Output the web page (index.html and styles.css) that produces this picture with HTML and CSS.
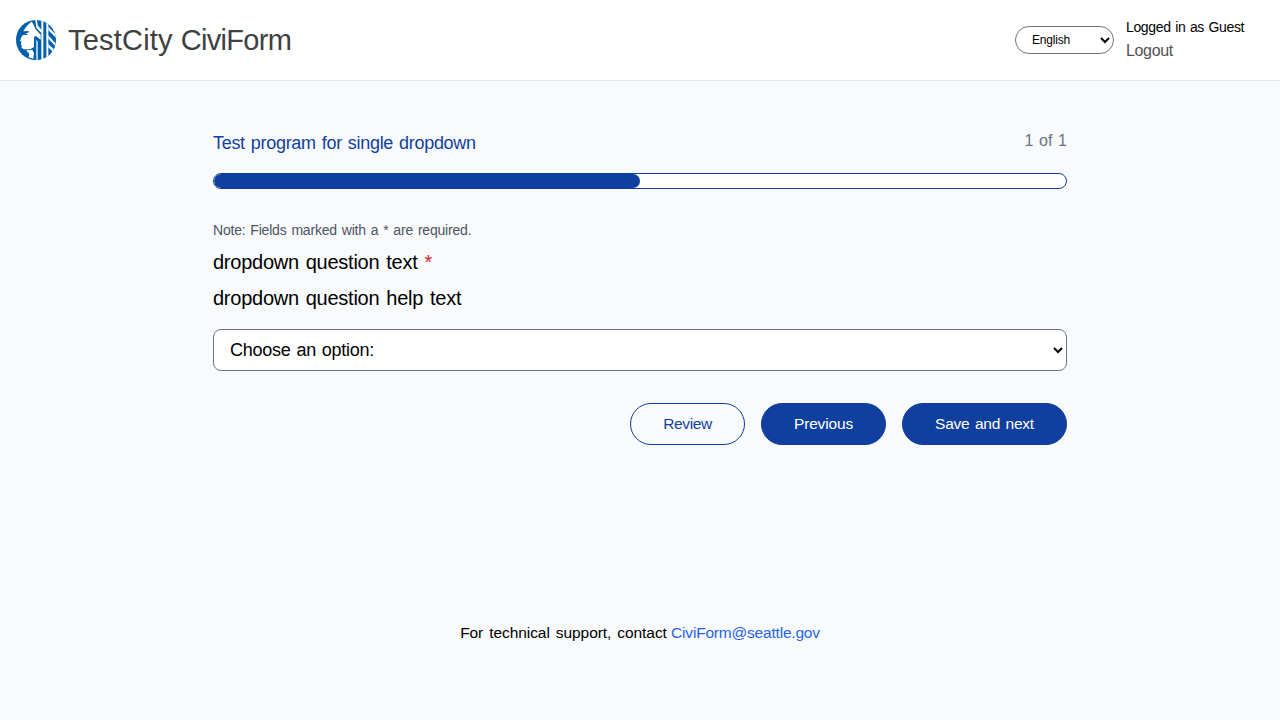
FILE: index.html
```html
<!DOCTYPE html>
<html lang="en">
<head>
<meta charset="utf-8">
<title>TestCity CiviForm</title>
<link rel="stylesheet" href="styles.css">
</head>
<body>
<header class="header">
  <a class="brand" href="#">
    <svg class="logo" viewBox="0 0 120 120" aria-hidden="true">
      <defs><clipPath id="disc"><circle cx="60" cy="60" r="60"/></clipPath></defs>
      <g clip-path="url(#disc)">
        <rect width="120" height="120" fill="#0060ab"/>
        <g fill="#fff">
          <path d="M47 5C36 12 27 23 22 34L37 33L39 37L30 40L36 45L24 44L18 47L12 62L17 66L14 72L17 76L17 84L24 88H43L54 81V51L60 48L74 59V44L58 27L52 12Z"/>
          <path d="M30 91L49 90L54 99L52 116L38 112L40 101Z"/>
          <path d="M58 0H63L65 16L77 31V40L61 24Z"/>
          <path d="M61 61L65 64V120H61Z"/>
          <path d="M76 0H82V120H76Z"/>
          <path d="M91 0H97V120H91Z"/>
          <path d="M97 20L120 44V53L97 31Z"/>
          <path d="M97 46L120 72V80L97 56Z"/>
          <path d="M97 72L120 94V105L97 82Z"/>
        </g>
      </g>
    </svg>
    <span class="brand-name"><span class="city">TestCity</span> <span class="product">CiviForm</span></span>
  </a>
  <div class="account">
    <select class="language" aria-label="Language"><option>English</option></select>
    <div class="session">
      <div class="guest">Logged in as Guest</div>
      <a class="logout" href="#">Logout</a>
    </div>
  </div>
</header>
<main class="main">
  <div class="program">
    <h1 class="program-title">Test program for single dropdown</h1>
    <span class="step">1 of 1</span>
  </div>
  <div class="progress"><div class="progress-fill"></div></div>
  <form class="form">
    <p class="note">Note: Fields marked with a * are required.</p>
    <p class="question">dropdown question text <span class="required">*</span></p>
    <p class="question help">dropdown question help text</p>
    <select class="answer" aria-label="Answer"><option>Choose an option:</option></select>
    <div class="actions">
      <a class="button outline" href="#">Review</a>
      <button class="button previous" type="button">Previous</button>
      <button class="button next" type="button">Save and next</button>
    </div>
  </form>
</main>
<footer class="footer"><span class="support">For technical support, contact</span> <a class="email" href="#">CiviForm@seattle.gov</a></footer>
</body>
</html>
```
FILE: styles.css
```css
* { box-sizing: border-box; }
body {
  margin: 0;
  min-height: 720px;
  background: #f8fafc;
  color: #000;
  font: 16px/24px "Liberation Sans", Arial, sans-serif;
}
a { color: inherit; text-decoration: none; }
h1, p { margin: 0; font-weight: 400; white-space: nowrap; }
.header {
  display: flex;
  justify-content: space-between;
  height: 81px;
  padding: 0 36px 0 16px;
  background: #fff;
  border-bottom: 1px solid #e5e7eb;
}
.brand { display: flex; align-items: center; gap: 12px; color: #404040; }
.logo { display: block; width: 40px; height: 40px; }
.brand-name { font-size: 29px; line-height: 36px; white-space: nowrap; }
.city { letter-spacing: 0.2px; }
.product { letter-spacing: -0.7px; }
.account { display: flex; align-items: center; gap: 12px; }
.language {
  width: 99px;
  height: 28px;
  padding: 0 12px;
  border: 1px solid #6b7280;
  border-radius: 14px;
  background: #fff;
  color: #000;
  font: 12px/16px "Liberation Sans", Arial, sans-serif;
  letter-spacing: -0.2px;
}
.session { width: 118px; }
.guest {
  margin-bottom: 2px;
  font-size: 14px;
  line-height: 20px;
  letter-spacing: -0.35px;
  word-spacing: 1px;
  white-space: nowrap;
}
.logout { display: block; color: #525252; letter-spacing: -0.35px; }
.main { width: 854px; margin: 48px auto 0; }
.program { display: flex; justify-content: space-between; height: 44px; }
.program-title {
  font-size: 18px;
  line-height: 28px;
  letter-spacing: -0.3px;
  word-spacing: 1.3px;
  color: #113f9f;
}
.step { color: #6b7280; word-spacing: 1.2px; white-space: nowrap; }
.progress {
  height: 16px;
  border: 1px solid #113f9f;
  border-radius: 8px;
  background: #fff;
  overflow: hidden;
}
.progress-fill { width: 50%; height: 14px; border-radius: 8px; background: #113f9f; }
.form { padding-top: 31px; }
.note {
  font-size: 14px;
  line-height: 20px;
  letter-spacing: -0.2px;
  word-spacing: 1.2px;
  color: #4b5563;
}
.question {
  margin-top: 8px;
  font-size: 20px;
  line-height: 28px;
  letter-spacing: -0.25px;
  word-spacing: 1.6px;
}
.required { color: #dc2626; }
.answer {
  display: block;
  width: 100%;
  height: 42px;
  margin-top: 17px;
  padding: 0 12px;
  border: 1px solid #6b7280;
  border-radius: 8px;
  background: #fff;
  color: #000;
  font: 18px/28px "Liberation Sans", Arial, sans-serif;
  letter-spacing: -0.25px;
  word-spacing: 1.1px;
}
.actions { display: flex; justify-content: flex-end; gap: 16px; margin-top: 32px; }
.button {
  display: flex;
  align-items: center;
  justify-content: center;
  height: 42px;
  padding: 0;
  border: 1px solid #113f9f;
  border-radius: 21px;
  background: #113f9f;
  color: #fff;
  font: 15.5px/24px "Liberation Sans", Arial, sans-serif;
  white-space: nowrap;
}
.outline { width: 115px; background: transparent; color: #113f9f; letter-spacing: -0.35px; }
.previous { width: 125px; letter-spacing: -0.15px; }
.next { width: 165px; letter-spacing: -0.25px; word-spacing: 1.5px; }
.footer { margin-top: 176px; font-size: 15.5px; text-align: center; }
.support { letter-spacing: -0.07px; word-spacing: 1.8px; }
.email { color: #2563eb; letter-spacing: -0.2px; }
```
